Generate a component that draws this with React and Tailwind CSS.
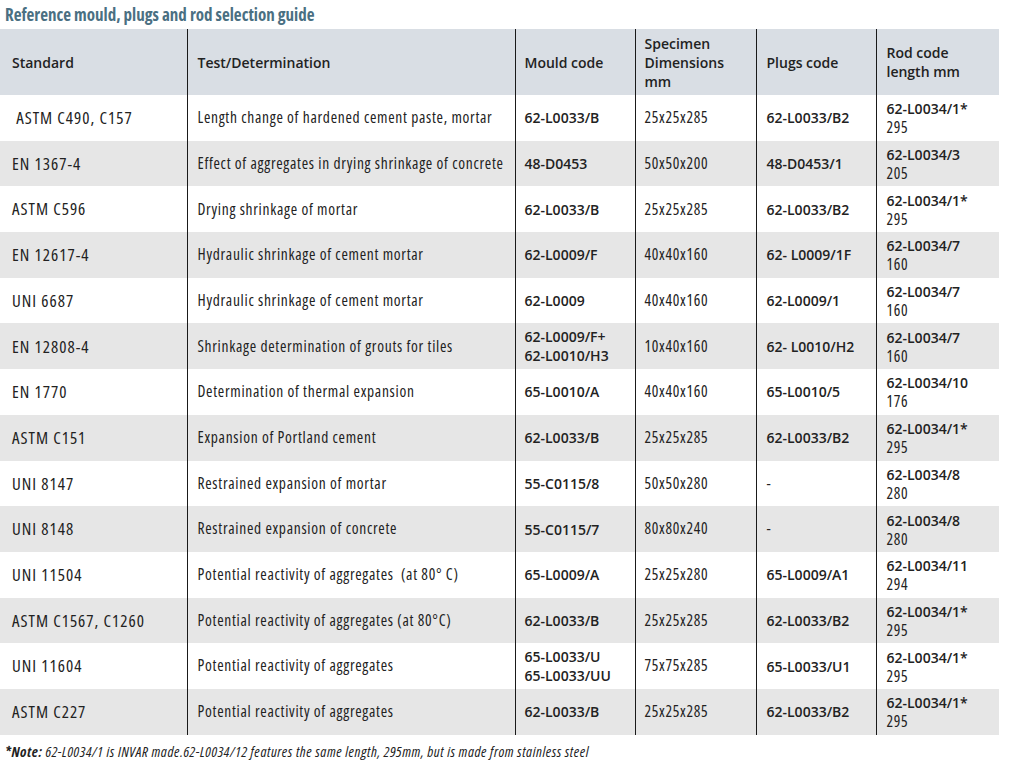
import React from "react";

const rows = [
  { std: "\u00a0ASTM C490, C157", test: "Length change of hardened cement paste, mortar", mould: ["62-L0033/B"], dim: "25x25x285", plugs: "62-L0033/B2", rod: "62-L0034/1*", len: "295" },
  { std: "EN 1367-4", test: "Effect of aggregates in drying shrinkage of concrete", mould: ["48-D0453"], dim: "50x50x200", plugs: "48-D0453/1", rod: "62-L0034/3", len: "205" },
  { std: "ASTM C596", test: "Drying shrinkage of mortar", mould: ["62-L0033/B"], dim: "25x25x285", plugs: "62-L0033/B2", rod: "62-L0034/1*", len: "295" },
  { std: "EN 12617-4", test: "Hydraulic shrinkage of cement mortar", mould: ["62-L0009/F"], dim: "40x40x160", plugs: "62- L0009/1F", rod: "62-L0034/7", len: "160" },
  { std: "UNI 6687", test: "Hydraulic shrinkage of cement mortar", mould: ["62-L0009"], dim: "40x40x160", plugs: "62-L0009/1", rod: "62-L0034/7", len: "160" },
  { std: "EN 12808-4", test: "Shrinkage determination of grouts for tiles", mould: ["62-L0009/F+", "62-L0010/H3"], dim: "10x40x160", plugs: "62- L0010/H2", rod: "62-L0034/7", len: "160" },
  { std: "EN 1770", test: "Determination of thermal expansion", mould: ["65-L0010/A"], dim: "40x40x160", plugs: "65-L0010/5", rod: "62-L0034/10", len: "176" },
  { std: "ASTM C151", test: "Expansion of Portland cement", mould: ["62-L0033/B"], dim: "25x25x285", plugs: "62-L0033/B2", rod: "62-L0034/1*", len: "295" },
  { std: "UNI 8147", test: "Restrained expansion of mortar", mould: ["55-C0115/8"], dim: "50x50x280", plugs: "-", plugsPlain: true, rod: "62-L0034/8", len: "280" },
  { std: "UNI 8148", test: "Restrained expansion of concrete", mould: ["55-C0115/7"], dim: "80x80x240", plugs: "-", plugsPlain: true, rod: "62-L0034/8", len: "280" },
  { std: "UNI 11504", test: "Potential reactivity of aggregates \u00a0(at 80\u00b0 C)", mould: ["65-L0009/A"], dim: "25x25x280", plugs: "65-L0009/A1", rod: "62-L0034/11", len: "294" },
  { std: "ASTM C1567, C1260", test: "Potential reactivity of aggregates (at 80\u00b0C)", mould: ["62-L0033/B"], dim: "25x25x285", plugs: "62-L0033/B2", rod: "62-L0034/1*", len: "295" },
  { std: "UNI 11604", test: "Potential reactivity of aggregates", mould: ["65-L0033/U", "65-L0033/UU"], dim: "75x75x285", plugs: "65-L0033/U1", rod: "62-L0034/1*", len: "295" },
  { std: "ASTM C227", test: "Potential reactivity of aggregates", mould: ["62-L0033/B"], dim: "25x25x285", plugs: "62-L0033/B2", rod: "62-L0034/1*", len: "295" },
];

const cond = "font-['Open_Sans',sans-serif] font-stretch-condensed text-[#222]";
const code = "font-['Open_Sans',sans-serif] font-semibold text-[14px] text-[#222]";
const plain = `${cond} text-[15.5px] tracking-[0.7px]`;
const std = `${cond} text-[17px] tracking-[1px]`;
const line = "border-l-[1.5px] border-[#1a1a1a]";

export default function App() {
  return (
    <div className="w-[1017px] h-[765px] bg-white relative overflow-hidden">
      <div className="h-[29px] flex items-center pl-[5px]">
        <span className="font-['Open_Sans',sans-serif] font-stretch-condensed font-bold text-[17px] text-[#4a6f82] leading-none">
          Reference mould, plugs and rod selection guide
        </span>
      </div>
      <table className="border-collapse table-fixed w-[999px]">
        <colgroup>
          <col className="w-[187px]" />
          <col className="w-[328px]" />
          <col className="w-[120px]" />
          <col className="w-[121px]" />
          <col className="w-[120px]" />
          <col className="w-[123px]" />
        </colgroup>
        <thead>
          <tr className="h-[66px] bg-[#d9dee4] font-['Open_Sans',sans-serif] font-semibold text-[14px] leading-[19px] text-[#222] text-left">
            <th className="pl-[12px] font-semibold">Standard</th>
            <th className={`pl-[10px] font-semibold ${line}`}>Test/Determination</th>
            <th className={`pl-[9px] font-semibold ${line}`}>Mould code</th>
            <th className={`pl-[9px] font-semibold ${line}`}>Specimen<br />Dimensions<br />mm</th>
            <th className={`pl-[10px] font-semibold ${line}`}>Plugs code</th>
            <th className={`pl-[10px] font-semibold ${line}`}>Rod code<br />length mm</th>
          </tr>
        </thead>
        <tbody>
          {rows.map((r, i) => (
            <tr key={i} className={`h-[45.7px] ${i % 2 === 1 ? "bg-[#e6e6e6]" : "bg-white"}`}>
              <td className={`pl-[12px] ${std}`}>{r.std}</td>
              <td className={`pl-[10px] ${plain} ${line}`}>{r.test}</td>
              <td className={`pl-[9px] ${line} ${code} leading-[19px]`}>
                {r.mould.map((m, k) => (
                  <div key={k}>{m}</div>
                ))}
              </td>
              <td className={`pl-[9px] ${plain} ${line}`}>{r.dim}</td>
              <td className={`pl-[10px] ${line} ${r.plugsPlain ? plain : code}`}>{r.plugs}</td>
              <td className={`pl-[10px] ${line}`}>
                <div className={`${code} leading-[19px]`}>{r.rod}</div>
                <div className={`${plain} leading-[18px]`}>{r.len}</div>
              </td>
            </tr>
          ))}
        </tbody>
      </table>
      <div className="pl-[5px] pt-[4px]">
        <span className={`${cond} italic text-[14.5px] tracking-[0.55px]`}>
          <span className="font-bold">*Note:</span> 62-L0034/1 is INVAR made.62-L0034/12 features the same length, 295mm, but is made from stainless steel
        </span>
      </div>
    </div>
  );
}
